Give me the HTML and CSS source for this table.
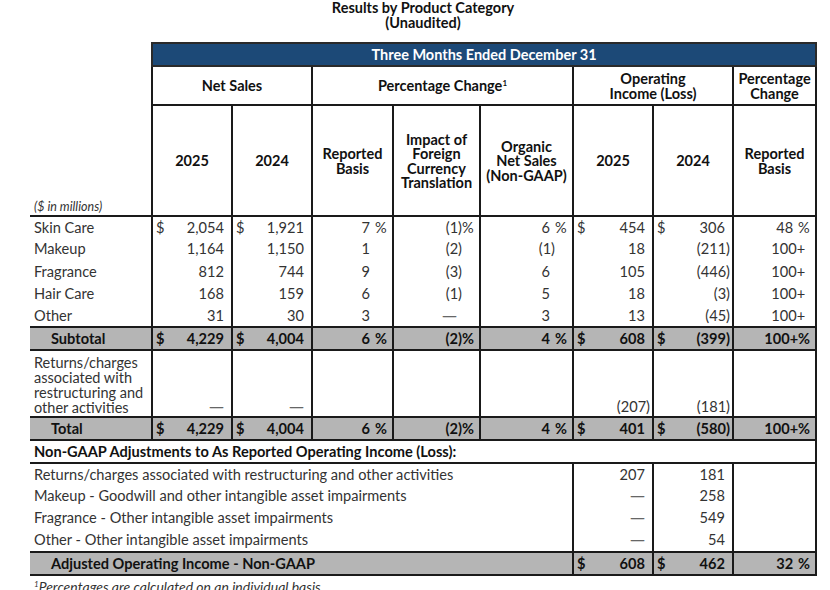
FILE: index.html
```html
<!DOCTYPE html>
<html>
<head>
<meta charset="utf-8">
<link rel="stylesheet" href="styles.css">
</head>
<body>
<div class="page">
  <div class="title">Results by Product Category<br>(Unaudited)</div>
  <table class="grid">
    <colgroup>
      <col class="w-label"><col class="w80"><col class="w80"><col class="w81"><col class="w87"><col class="w93"><col class="w80"><col class="w80"><col class="w83">
    </colgroup>
    <tr class="r-blue">
      <td class="blank"></td>
      <td class="blue" colspan="8">Three Months Ended December 31</td>
    </tr>
    <tr class="r-h2">
      <td class="blank"></td>
      <td class="hd" colspan="2">Net Sales</td>
      <td class="hd" colspan="3">Percentage Change<sup>1</sup></td>
      <td class="hd" colspan="2">Operating<br>Income (Loss)</td>
      <td class="hd">Percentage<br>Change</td>
    </tr>
    <tr class="r-h3">
      <td class="blank units">($ in millions)</td>
      <td class="hd">2025</td>
      <td class="hd">2024</td>
      <td class="hd">Reported<br>Basis</td>
      <td class="hd">Impact of<br>Foreign<br>Currency<br>Translation</td>
      <td class="hd">Organic<br>Net Sales<br>(Non-GAAP)</td>
      <td class="hd">2025</td>
      <td class="hd">2024</td>
      <td class="hd">Reported<br>Basis</td>
    </tr>

    <tr class="h21 first">
      <td class="lbl">Skin Care</td>
      <td class="n"><div class="c"><span class="cur">$</span><span>2,054</span></div></td>
      <td class="n"><div class="c"><span class="cur">$</span><span>1,921</span></div></td>
      <td class="n p"><div class="c"><span>7</span><span class="sfx">%</span></div></td>
      <td class="n p"><div class="c"><span class="hang">(1)</span><span class="sfx">%</span></div></td>
      <td class="n p"><div class="c"><span>6</span><span class="sfx">%</span></div></td>
      <td class="n"><div class="c"><span class="cur">$</span><span>454</span></div></td>
      <td class="n"><div class="c"><span class="cur">$</span><span>306</span></div></td>
      <td class="n p"><div class="c"><span>48</span><span class="sfx">%</span></div></td>
    </tr>
    <tr class="h22">
      <td class="lbl">Makeup</td>
      <td class="n"><div class="c"><span>1,164</span></div></td>
      <td class="n"><div class="c"><span>1,150</span></div></td>
      <td class="n p"><div class="c"><span>1</span><span class="sfx"></span></div></td>
      <td class="n p"><div class="c"><span class="hang">(2)</span><span class="sfx"></span></div></td>
      <td class="n p"><div class="c"><span class="hang">(1)</span><span class="sfx"></span></div></td>
      <td class="n"><div class="c"><span>18</span></div></td>
      <td class="n"><div class="c"><span class="hang">(211)</span></div></td>
      <td class="n p"><div class="c"><span class="plus">100+</span><span class="sfx"></span></div></td>
    </tr>
    <tr class="h23">
      <td class="lbl">Fragrance</td>
      <td class="n"><div class="c"><span>812</span></div></td>
      <td class="n"><div class="c"><span>744</span></div></td>
      <td class="n p"><div class="c"><span>9</span><span class="sfx"></span></div></td>
      <td class="n p"><div class="c"><span class="hang">(3)</span><span class="sfx"></span></div></td>
      <td class="n p"><div class="c"><span>6</span><span class="sfx"></span></div></td>
      <td class="n"><div class="c"><span>105</span></div></td>
      <td class="n"><div class="c"><span class="hang">(446)</span></div></td>
      <td class="n p"><div class="c"><span class="plus">100+</span><span class="sfx"></span></div></td>
    </tr>
    <tr class="h22">
      <td class="lbl">Hair Care</td>
      <td class="n"><div class="c"><span>168</span></div></td>
      <td class="n"><div class="c"><span>159</span></div></td>
      <td class="n p"><div class="c"><span>6</span><span class="sfx"></span></div></td>
      <td class="n p"><div class="c"><span class="hang">(1)</span><span class="sfx"></span></div></td>
      <td class="n p"><div class="c"><span>5</span><span class="sfx"></span></div></td>
      <td class="n"><div class="c"><span>18</span></div></td>
      <td class="n"><div class="c"><span class="hang">(3)</span></div></td>
      <td class="n p"><div class="c"><span class="plus">100+</span><span class="sfx"></span></div></td>
    </tr>
    <tr class="h21">
      <td class="lbl">Other</td>
      <td class="n"><div class="c"><span>31</span></div></td>
      <td class="n"><div class="c"><span>30</span></div></td>
      <td class="n p"><div class="c"><span>3</span><span class="sfx"></span></div></td>
      <td class="n p"><div class="c"><span class="dash">—</span><span class="sfx"></span></div></td>
      <td class="n p"><div class="c"><span>3</span><span class="sfx"></span></div></td>
      <td class="n"><div class="c"><span>13</span></div></td>
      <td class="n"><div class="c"><span class="hang">(45)</span></div></td>
      <td class="n p"><div class="c"><span class="plus">100+</span><span class="sfx"></span></div></td>
    </tr>
    <tr class="h21 band">
      <td class="lbl sub">Subtotal</td>
      <td class="n"><div class="c"><span class="cur">$</span><span>4,229</span></div></td>
      <td class="n"><div class="c"><span class="cur">$</span><span>4,004</span></div></td>
      <td class="n p"><div class="c"><span>6</span><span class="sfx">%</span></div></td>
      <td class="n p"><div class="c"><span class="hang">(2)</span><span class="sfx">%</span></div></td>
      <td class="n p"><div class="c"><span>4</span><span class="sfx">%</span></div></td>
      <td class="n"><div class="c"><span class="cur">$</span><span>608</span></div></td>
      <td class="n"><div class="c"><span class="cur">$</span><span class="hang">(399)</span></div></td>
      <td class="n p"><div class="c"><span class="plus2">100+</span><span class="sfx">%</span></div></td>
    </tr>
    <tr class="r-ret">
      <td class="lbl multi">Returns/charges<br>associated with<br>restructuring and<br>other activities</td>
      <td class="n"><div class="c"><span class="dash">—</span></div></td>
      <td class="n"><div class="c"><span class="dash">—</span></div></td>
      <td class="n"></td>
      <td class="n"></td>
      <td class="n"></td>
      <td class="n"><div class="c"><span class="hang">(207)</span></div></td>
      <td class="n"><div class="c"><span class="hang">(181)</span></div></td>
      <td class="n"></td>
    </tr>
    <tr class="h21 band">
      <td class="lbl sub">Total</td>
      <td class="n"><div class="c"><span class="cur">$</span><span>4,229</span></div></td>
      <td class="n"><div class="c"><span class="cur">$</span><span>4,004</span></div></td>
      <td class="n p"><div class="c"><span>6</span><span class="sfx">%</span></div></td>
      <td class="n p"><div class="c"><span class="hang">(2)</span><span class="sfx">%</span></div></td>
      <td class="n p"><div class="c"><span>4</span><span class="sfx">%</span></div></td>
      <td class="n"><div class="c"><span class="cur">$</span><span>401</span></div></td>
      <td class="n"><div class="c"><span class="cur">$</span><span class="hang">(580)</span></div></td>
      <td class="n p"><div class="c"><span class="plus2">100+</span><span class="sfx">%</span></div></td>
    </tr>
    <tr class="h21">
      <td class="ng-head" colspan="9">Non-GAAP Adjustments to As Reported Operating Income (Loss):</td>
    </tr>
    <tr class="h21">
      <td class="lbl" colspan="6">Returns/charges associated with restructuring and other activities</td>
      <td class="n"><div class="c"><span>207</span></div></td>
      <td class="n"><div class="c"><span>181</span></div></td>
      <td class="n"></td>
    </tr>
    <tr class="h22">
      <td class="lbl" colspan="6">Makeup - Goodwill and other intangible asset impairments</td>
      <td class="n"><div class="c"><span class="dash">—</span></div></td>
      <td class="n"><div class="c"><span>258</span></div></td>
      <td class="n"></td>
    </tr>
    <tr class="h22">
      <td class="lbl" colspan="6">Fragrance - Other intangible asset impairments</td>
      <td class="n"><div class="c"><span class="dash">—</span></div></td>
      <td class="n"><div class="c"><span>549</span></div></td>
      <td class="n"></td>
    </tr>
    <tr class="h22">
      <td class="lbl" colspan="6">Other - Other intangible asset impairments</td>
      <td class="n"><div class="c"><span class="dash">—</span></div></td>
      <td class="n"><div class="c"><span>54</span></div></td>
      <td class="n"></td>
    </tr>
    <tr class="h21 band">
      <td class="lbl sub" colspan="6">Adjusted Operating Income - Non-GAAP</td>
      <td class="n"><div class="c"><span class="cur">$</span><span>608</span></div></td>
      <td class="n"><div class="c"><span class="cur">$</span><span>462</span></div></td>
      <td class="n p"><div class="c"><span>32</span><span class="sfx">%</span></div></td>
    </tr>
  </table>
  <div class="foot"><sup>1</sup>Percentages are calculated on an individual basis</div>
</div>
</body>
</html>
```

FILE: styles.css
```css
html, body {
  margin: 0;
  padding: 0;
  background: #ffffff;
}
body {
  font-family: Lato, "Open Sans", sans-serif;
  color: #333333;
}
.page {
  padding-left: 30px;
  width: 786px;
}
.title {
  height: 42px;
  padding-top: 1px;
  box-sizing: border-box;
  text-align: center;
  font-weight: bold;
  font-size: 14.5px;
  line-height: 14.5px;
  color: #111111;
}
.grid {
  border-collapse: collapse;
  table-layout: fixed;
  width: 786px;
  font-size: 14.6px;
}
.w-label { width: 122px; }
.w80 { width: 80px; }
.w81 { width: 81px; }
.w83 { width: 83px; }
.w87 { width: 87px; }
.w93 { width: 93px; }
.grid td {
  padding: 0;
  line-height: 16px;
}
.grid td.blank {
  border: none;
}
.grid td.blue {
  background: #1c4977;
  color: #ffffff;
  font-weight: bold;
  font-size: 14.5px;
  text-align: center;
  border: 2px solid #2a2a2a;
  height: 20px;
  padding-top: 1px;
}
.r-h2 td { height: 35px; }
.r-h3 td { height: 107px; }
.grid td.hd {
  border: 2px solid #1a1a1a;
  text-align: center;
  vertical-align: middle;
  font-weight: bold;
  font-size: 14.5px;
  line-height: 14.5px;
  color: #111111;
  padding-top: 2px;
}
.r-h2 .hd { line-height: 14px; }
.r-h3 .hd { line-height: 15px; }
.hd sup {
  font-size: 8px;
  vertical-align: 5px;
  line-height: 0;
}
.grid td.units {
  vertical-align: bottom;
  font-style: italic;
  font-size: 12.5px;
  line-height: 16px;
  padding: 0 0 0 4px;
  color: #333333;
}
.h21 td { height: 21px; }
.h22 td { height: 22px; }
.h23 td { height: 23px; }
.first td { border-top: 2px solid #1a1a1a; }
.grid td.lbl {
  padding-left: 4px;
  white-space: nowrap;
  color: #333333;
}
.grid td.lbl.sub {
  padding-left: 21px;
  font-weight: bold;
  color: #111111;
}
.grid td.n {
  border-left: 2px solid #1a1a1a;
  border-right: 2px solid #1a1a1a;
}
.c {
  display: flex;
  justify-content: flex-end;
  align-items: baseline;
  padding: 0 7px 0 3px;
}
.p .c { padding-right: 1px; }
.cur { margin-right: auto; }
.sfx {
  width: 21px;
  box-sizing: border-box;
  padding-left: 5px;
  text-align: left;
}
.hang { margin-right: -5px; }
.plus { margin-right: -12px; }
.plus2 { margin-right: -5px; }
.dash {
  font-family: "DejaVu Sans", sans-serif;
  font-size: 15px;
  color: #666666;
}
.band td {
  background: #b5b5b5;
  border-top: 2px solid #1a1a1a;
  border-bottom: 2px solid #1a1a1a;
  font-weight: bold;
  color: #111111;
}
.r-ret td {
  height: 64px;
  vertical-align: bottom;
}
.grid td.multi {
  font-size: 14.5px;
  line-height: 15px;
  padding-bottom: 1px;
  white-space: nowrap;
}
.r-ret .c { padding-bottom: 1px; }
.grid td.ng-head {
  padding-left: 4px;
  font-weight: bold;
  color: #111111;
  border-right: 2px solid #1a1a1a;
  border-bottom: 2px solid #1a1a1a;
}
.foot {
  padding: 3px 0 0 4px;
  font-style: italic;
  font-size: 14px;
  line-height: 16px;
  color: #333333;
}
.foot sup {
  font-size: 8px;
  vertical-align: 5px;
  line-height: 0;
}
```
